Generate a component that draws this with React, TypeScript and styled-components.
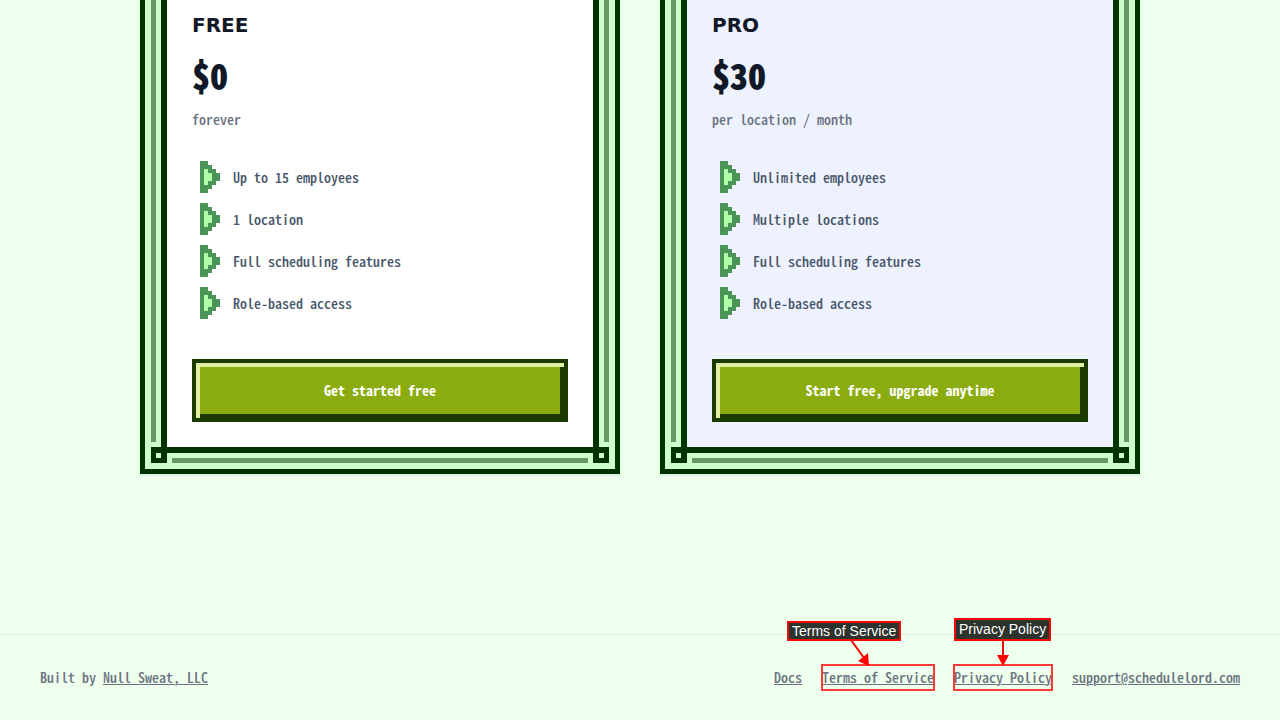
import React from "react";
import styled, { createGlobalStyle } from "styled-components";

const DARK = "#003300";
const MID = "#669966";
const LIGHT = "#ccffcc";

const GlobalStyle = createGlobalStyle`
  * { box-sizing: border-box; }
  body {
    margin: 0;
    background: #eeffee;
    color: #6b7280;
    font-family: "Noto Sans CJK JP", "Liberation Mono", monospace;
    font-feature-settings: "hwid";
    font-size: 14px;
    font-weight: 500;
    line-height: 21px;
  }
`;

const Page = styled.div`
  display: flex;
  flex-direction: column;
  min-height: 100vh;
`;

const Plans = styled.main`
  display: grid;
  grid-template-columns: repeat(auto-fit, minmax(320px, 1fr));
  gap: 40px;
  width: 100%;
  max-width: 1000px;
  margin: 0 auto;
  padding-bottom: 160px;
  flex: 1;
  align-content: start;
`;

const Frame = styled.section`
  display: grid;
  grid-template-columns: 16px 1fr 16px;
  grid-template-rows: 1fr 16px;
  border: 5px solid ${DARK};
  border-top: 0;
  padding: 0 6px 6px;
  background: ${LIGHT};
  box-shadow: 0 1px 3px rgba(0, 0, 0, 0.12);
`;

const SideRail = styled.div<{ $side: "left" | "right" }>`
  border-${(p) => (p.$side === "left" ? "right" : "left")}: 6px solid ${DARK};
  padding-bottom: 5px;
  &::before {
    content: "";
    display: block;
    width: 5px;
    height: 100%;
    margin-left: ${(p) => (p.$side === "left" ? "0" : "auto")};
    background: ${MID};
  }
`;

const BottomRail = styled.div`
  border-top: 6px solid ${DARK};
  padding: 5px 5px 0;
  &::before {
    content: "";
    display: block;
    height: 5px;
    background: ${MID};
  }
`;

const Corner = styled.div<{ $side: "left" | "right" }>`
  border: solid ${DARK};
  border-width: ${(p) => (p.$side === "left" ? "6px 6px 5px 5px" : "6px 5px 5px 6px")};
`;

const Content = styled.div<{ $tint: string }>`
  display: flex;
  flex-direction: column;
  padding: 13px 25px 25px;
  background: ${(p) => p.$tint};
`;

const PlanName = styled.h3`
  margin: 0 0 17px;
  color: #111827;
  font: bold 20px/24px "DejaVu Sans", sans-serif;
`;

const Price = styled.div`
  margin-bottom: 15px;
  color: #111827;
  font-size: 36px;
  font-weight: 900;
  line-height: 40px;
`;

const Period = styled.div`
  margin-bottom: 31px;
`;

const Features = styled.ul`
  display: flex;
  flex-direction: column;
  gap: 10px;
  margin: 0 0 40px;
  padding: 0 0 0 8px;
  list-style: none;
  color: #475569;
`;

const Feature = styled.li`
  display: flex;
  align-items: center;
  gap: 13px;
`;

const Action = styled.button`
  height: 63px;
  border: 4px solid #1b3a00;
  background: #8bac0f;
  box-shadow: inset 4px 4px #e0f0a0, inset -4px -4px #1b3a00;
  color: #fff;
  font: inherit;
  font-feature-settings: inherit;
  font-weight: 700;
  cursor: pointer;
`;

const Footer = styled.footer`
  display: flex;
  flex-wrap: wrap;
  justify-content: space-between;
  gap: 20px;
  padding: 32px 40px;
  border-top: 1px solid #e5e7eb;
`;

const Links = styled.nav`
  display: flex;
  flex-wrap: wrap;
  gap: 20px;
`;

const TextLink = styled.a`
  color: inherit;
  text-decoration: underline;
  text-decoration-thickness: 1px;
  text-underline-offset: 1px;
`;

const Marked = styled.span`
  position: relative;
`;

const Outline = styled.span`
  position: absolute;
  inset: -3px -1px;
  border: 2px solid #ff3b38;
  pointer-events: none;
`;

const Callout = styled.span<{ $left: number; $top: number; $height: number }>`
  position: absolute;
  left: ${(p) => p.$left}px;
  top: ${(p) => p.$top}px;
  height: ${(p) => p.$height}px;
  padding: 0 3px;
  border: 2px solid #f50a0a;
  background: #2d332d;
  color: #fff;
  font: 14px "Liberation Sans", sans-serif;
  line-height: ${(p) => p.$height - 4}px;
  white-space: nowrap;
`;

const Arrow = styled.svg`
  position: absolute;
  left: 20px;
  top: -27px;
  pointer-events: none;
`;

const Bullet = () => (
  <svg width="20" height="32" viewBox="0 0 5 8" shapeRendering="crispEdges" aria-hidden="true">
    <path fill="#4a9457" d="M0 0h2v1h1v1h1v1h1v2H4v1H3v1H2v1H0z" />
    <path fill="#b0ffa8" d="M1 2h1v1h1v2H2v1H1z" />
  </svg>
);

const plans = [
  {
    name: "FREE",
    price: "$0",
    period: "forever",
    tint: "#ffffff",
    action: "Get started free",
    features: ["Up to 15 employees", "1 location", "Full scheduling features", "Role-based access"],
  },
  {
    name: "PRO",
    price: "$30",
    period: "per location / month",
    tint: "#eef2ff",
    action: "Start free, upgrade anytime",
    features: ["Unlimited employees", "Multiple locations", "Full scheduling features", "Role-based access"],
  },
];

export default function App() {
  return (
    <Page>
      <GlobalStyle />
      <Plans>
        {plans.map((plan) => (
          <Frame key={plan.name}>
            <SideRail $side="left" />
            <Content $tint={plan.tint}>
              <PlanName>{plan.name}</PlanName>
              <Price>{plan.price}</Price>
              <Period>{plan.period}</Period>
              <Features>
                {plan.features.map((feature) => (
                  <Feature key={feature}>
                    <Bullet />
                    {feature}
                  </Feature>
                ))}
              </Features>
              <Action type="button">{plan.action}</Action>
            </Content>
            <SideRail $side="right" />
            <Corner $side="left" />
            <BottomRail />
            <Corner $side="right" />
          </Frame>
        ))}
      </Plans>
      <Footer>
        <div>
          Built by <TextLink href="#company">Null Sweat, LLC</TextLink>
        </div>
        <Links>
          <TextLink href="#docs">Docs</TextLink>
          <Marked>
            <TextLink href="#terms">Terms of Service</TextLink>
            <Outline />
            <Arrow width="40" height="28" aria-hidden="true">
              <path d="M9 0L22 18" stroke="#f00" strokeWidth="2" />
              <path d="M27 26L16 21L26 13z" fill="#f00" />
            </Arrow>
            <Callout $left={-35} $top={-46} $height={20}>Terms of Service</Callout>
          </Marked>
          <Marked>
            <TextLink href="#privacy">Privacy Policy</TextLink>
            <Outline />
            <Arrow width="60" height="28" aria-hidden="true">
              <path d="M29 0V18" stroke="#f00" strokeWidth="2" />
              <path d="M29 26L23 15H35z" fill="#f00" />
            </Arrow>
            <Callout $left={0} $top={-49} $height={23}>Privacy Policy</Callout>
          </Marked>
          <TextLink href="mailto:support@schedulelord.com">support@schedulelord.com</TextLink>
        </Links>
      </Footer>
    </Page>
  );
}
